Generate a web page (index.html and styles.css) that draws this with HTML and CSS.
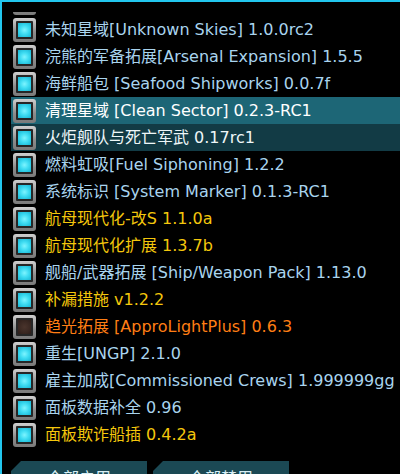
FILE: index.html
```html
<!DOCTYPE html>
<html lang="zh">
<head>
<meta charset="utf-8">
<link rel="stylesheet" href="styles.css">
</head>
<body>
<div class="frame">
  <div class="viewport">
    <div class="list">
      <div class="row"><span class="cb"><span class="fill"></span></span><span class="label blue">&nbsp;</span></div>
      <div class="row"><span class="cb"><span class="fill"></span></span><span class="label blue">未知星域[Unknown Skies] 1.0.0rc2</span></div>
      <div class="row"><span class="cb"><span class="fill"></span></span><span class="label blue">浣熊的军备拓展[Arsenal Expansion] 1.5.5</span></div>
      <div class="row"><span class="cb"><span class="fill"></span></span><span class="label blue">海鲜船包 [Seafood Shipworks] 0.0.7f</span></div>
      <div class="row sel"><span class="cb"><span class="fill"></span></span><span class="label">清理星域 [Clean Sector] 0.2.3-RC1</span></div>
      <div class="row hover"><span class="cb"><span class="fill"></span></span><span class="label">火炬舰队与死亡军武 0.17rc1</span></div>
      <div class="row"><span class="cb"><span class="fill"></span></span><span class="label blue">燃料虹吸[Fuel Siphoning] 1.2.2</span></div>
      <div class="row"><span class="cb"><span class="fill"></span></span><span class="label blue">系统标识 [System Marker] 0.1.3-RC1</span></div>
      <div class="row"><span class="cb"><span class="fill"></span></span><span class="label yellow">航母现代化-改S 1.1.0a</span></div>
      <div class="row"><span class="cb"><span class="fill"></span></span><span class="label yellow">航母现代化扩展 1.3.7b</span></div>
      <div class="row"><span class="cb"><span class="fill"></span></span><span class="label blue">舰船/武器拓展 [Ship/Weapon Pack] 1.13.0</span></div>
      <div class="row"><span class="cb"><span class="fill"></span></span><span class="label yellow">补漏措施 v1.2.2</span></div>
      <div class="row"><span class="cb off"><span class="fill"></span></span><span class="label orange">趋光拓展 [ApproLightPlus] 0.6.3</span></div>
      <div class="row"><span class="cb"><span class="fill"></span></span><span class="label blue">重生[UNGP] 2.1.0</span></div>
      <div class="row"><span class="cb"><span class="fill"></span></span><span class="label blue">雇主加成[Commissioned Crews] 1.999999gg</span></div>
      <div class="row"><span class="cb"><span class="fill"></span></span><span class="label blue">面板数据补全 0.96</span></div>
      <div class="row"><span class="cb"><span class="fill"></span></span><span class="label yellow">面板欺诈船插 0.4.2a</span></div>
    </div>
  </div>
  <div class="buttons">
    <div class="btn">全部启用</div>
    <div class="btn">全部禁用</div>
  </div>
</div>
</body>
</html>
```

FILE: styles.css
```css
html, body {
  margin: 0;
  padding: 0;
  background: #000;
  width: 400px;
  height: 474px;
  overflow: hidden;
}

.frame {
  box-sizing: border-box;
  width: 400px;
  height: 474px;
  border-top: 2px solid #22c6ee;
  border-left: 2px solid #22c6ee;
  padding-top: 10px;
  font-family: "DejaVu Sans", "Noto Sans CJK SC", sans-serif;
  font-size: 16px;
}

.viewport {
  height: 436px;
  overflow: hidden;
  margin-left: 9px;
}

.list {
  margin-top: -23px;
  display: flex;
  flex-direction: column;
}

.row {
  height: 27px;
  display: flex;
  align-items: center;
  gap: 9px;
  padding-left: 2px;
  white-space: nowrap;
}

.row.sel {
  background: #1d6676;
  color: #ffffff;
}

.row.hover {
  background: #123b45;
  color: #eef6f8;
}

.cb {
  flex: none;
  box-sizing: border-box;
  width: 23px;
  height: 24px;
  border-radius: 3px;
  padding: 3px;
  background: linear-gradient(#cfcfcf, #8c8c8c 60%, #7a7a7a);
  display: flex;
}

.fill {
  flex: 1;
  border: 2px solid #262626;
  border-radius: 1px;
  background: radial-gradient(circle at 50% 50%, #7ef4ff 0%, #3edcf2 45%, #16b4d2 100%);
}

.cb.off .fill {
  background: radial-gradient(circle at 50% 50%, #4a342c 0%, #3a2822 60%, #2c1e1a 100%);
}

.label {
  line-height: 20px;
}

.blue { color: #a9d4ee; }
.yellow { color: #f4c70c; }
.orange { color: #ff7e14; }

.buttons {
  display: flex;
  gap: 6px;
  margin-top: 13px;
  margin-left: 9px;
}

.btn {
  width: 136px;
  height: 28px;
  background: #1b4954;
  color: #d8eef4;
  clip-path: polygon(10px 0, 100% 0, 100% 100%, 0 100%, 0 10px);
  padding-left: 36px;
  box-sizing: border-box;
  padding-top: 4px;
  font-size: 16px;
}
```
